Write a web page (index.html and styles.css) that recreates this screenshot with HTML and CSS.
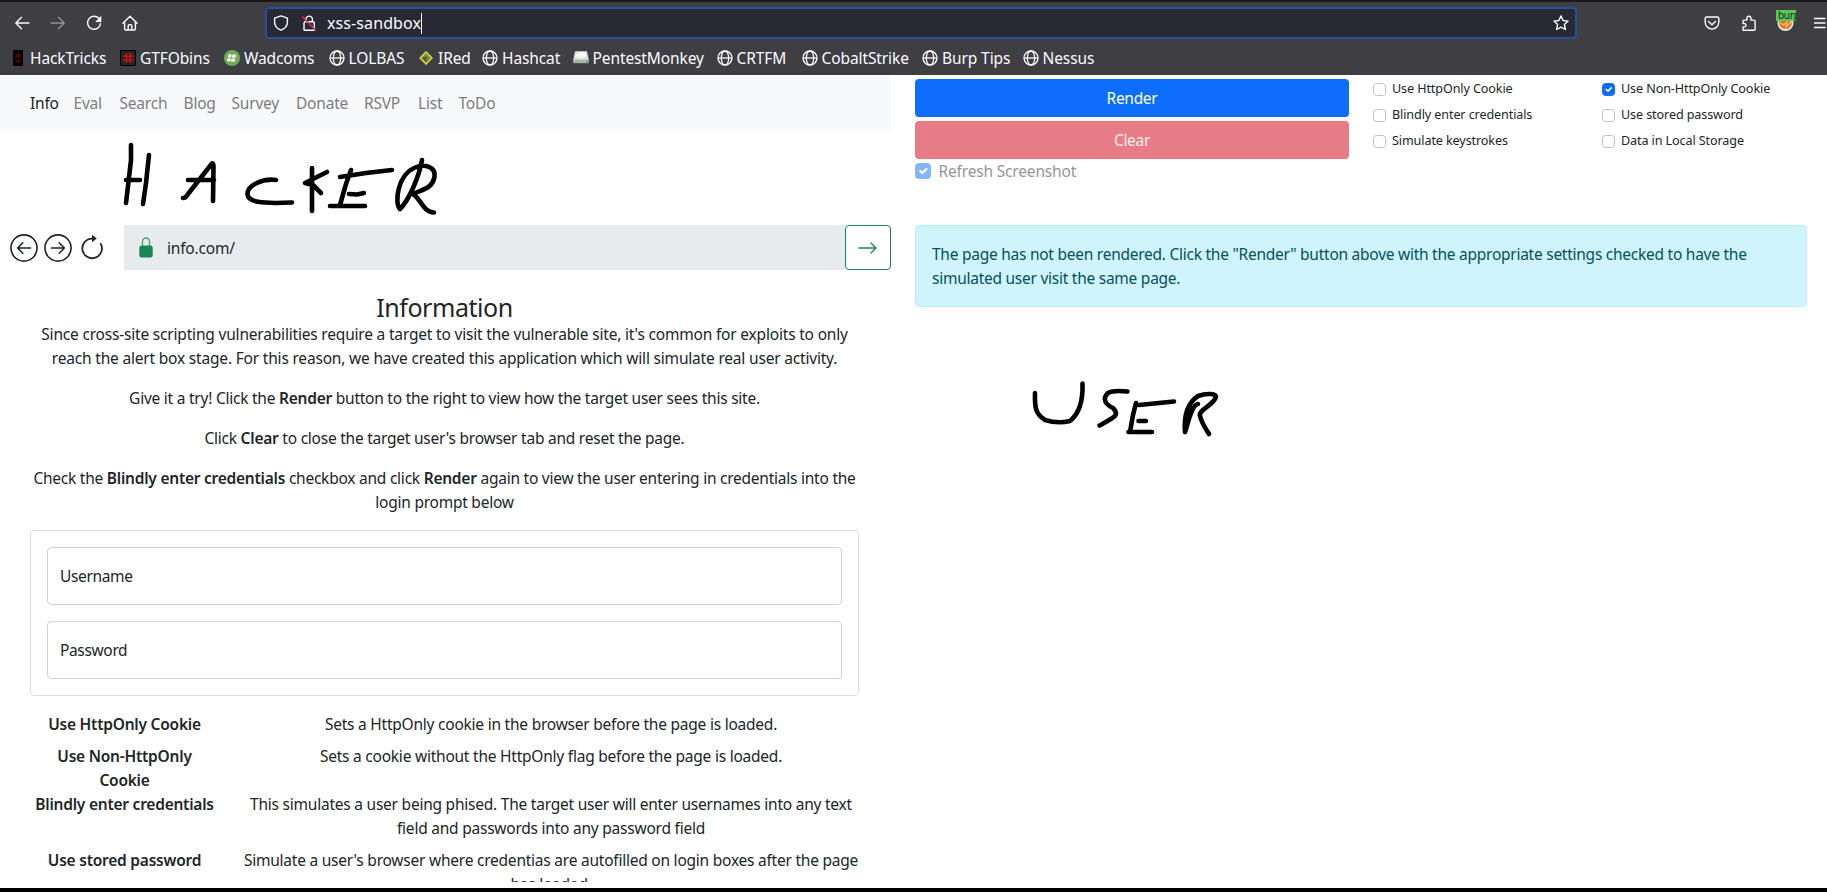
FILE: index.html
```html
<!DOCTYPE html>
<html lang="en">
<head>
<meta charset="utf-8">
<title>xss-sandbox</title>
<link rel="stylesheet" href="styles.css">
</head>
<body>
<svg width="0" height="0" class="defs">
  <symbol id="globe" viewBox="0 0 16 16"><g fill="none" stroke="#fbfbfe" stroke-width="1.3"><circle cx="8" cy="8" r="7"/><ellipse cx="8" cy="8" rx="3.7" ry="7"/><path d="M1 8h14"/></g></symbol>
</svg>
<header class="chrome">
  <div class="toolbar">
    <div class="nav-icons">
      <svg width="16" height="16" viewBox="0 0 16 16"><path d="M15 8H2M7.5 2.3 1.8 8l5.7 5.7" class="ln"/></svg>
      <svg width="16" height="16" viewBox="0 0 16 16" class="dim"><path d="M1 8h13M8.500 2.300 14.200 8l-5.700 5.700" class="ln"/></svg>
      <svg width="16" height="16" viewBox="0 0 16 16"><path d="M12.800 3.300A6.500 6.500 0 1 0 14.500 8.700" class="ln"/><path d="M15.300.8v6.100H9.200z" fill="#fbfbfe"/></svg>
      <svg width="16" height="16" viewBox="0 0 16 16"><path d="M.9 8.200 8 1.200l7.100 7M2.600 7v6.800q0 1.200 1.200 1.200h8.400q1.200 0 1.200-1.200V7M6.200 15v-4.200q0-1 1-1h1.600q1 0 1 1V15" class="ln"/></svg>
    </div>
    <div class="urlbar">
      <svg width="16" height="16" viewBox="0 0 16 16"><path d="M8 .9 14.400 3.100V7c0 4-2.800 6.800-6.400 8.200C4.400 13.800 1.600 11 1.600 7V3.100z" class="ln"/></svg>
      <svg width="16" height="16" viewBox="0 0 16 16" class="lock"><path d="M5 6.500V4.300a3.200 3.200 0 0 1 6.400 0v2.200M3 14.700V8.300q0-1.500 1.500-1.500h7.300q1.500 0 1.500 1.500v6.400q0 .5-.8.500H3.800q-.8 0-.8-.5z" class="ln"/><path d="m1.300 1.500 13.400 13.700" stroke="#e22850" stroke-width="1.500"/></svg>
      <span class="url">xss-sandbox</span><span class="caret"></span>
      <svg width="16" height="16" viewBox="0 0 16 16" class="star"><path d="m8 .9 2.100 4.600 5 .6-3.700 3.400 1 5L8 12.200l-4.400 2.300 1-5L.9 6.100l5-.6z" class="ln"/></svg>
    </div>
    <div class="tools">
      <svg width="16" height="16" viewBox="0 0 16 16"><path d="M2.500 2h11q1.300 0 1.300 1.300v4a6.800 6.800 0 0 1-13.600 0v-4Q1.200 2 2.500 2zM4.600 6.500 8 9.700l3.400-3.200" class="ln"/></svg>
      <svg width="16" height="16" viewBox="0 0 16 16"><path d="M2 15.200V11.900h1.300a1.700 1.700 0 0 0 0-3.400H2V5.900q0-.8.800-.8h3.100V3.200a2 2 0 0 1 4 0v1.900h3.200q1 0 1 1v8.100q0 1-1 1z" class="ln"/></svg>
      <span class="proxy"><svg width="20" height="20" viewBox="0 0 20 20"><circle cx="8.500" cy="12" r="8" fill="#e9e4df"/><path d="M2 11a6.500 6.500 0 0 0 13 1l-3-3H3z" fill="#d8791f"/><path d="m3 12 4 2 3-3-1 5 5-5" fill="none" stroke="#f6b469" stroke-width="1.400"/></svg><b>burp</b></span>
      <svg width="12" height="16" viewBox="0 0 12 16"><path d="M0 3.500h11M0 8h11M0 12.500h11" class="ln"/></svg>
    </div>
  </div>
  <nav class="bookmarks">
    <a><svg width="16" height="16" viewBox="0 0 16 16"><path d="M3 0h10v16H3z" fill="#0b0202"/><path d="M5.500 7.500 8 4l2 1.500-1.700 1 1.200 2M5.500 11h5" stroke="#8f0d0d" stroke-width="1" fill="none"/></svg>HackTricks</a>
    <a><svg width="16" height="16" viewBox="0 0 16 16"><path d="M.5.5h15v15H.5z" fill="#26262a" stroke="#000"/><path d="M6.500 3v10M10.300 3v10M3 6.200h10.500M3 10h10.500" stroke="#d40f0f" stroke-width="1.600"/></svg>GTFObins</a>
    <a><svg width="16" height="16" viewBox="0 0 16 16"><circle cx="8" cy="8" r="8" fill="#76a956"/><path d="m4.500 4.300 3.200.1-.7 3-3.200-.2zm4 .2 3.700.3-.7 3-3.700-.3zM3.600 8.200l3.200.2-.7 3-3.200-.4zm4 .3 3.700.3-.7 3-3.700-.4z" fill="#fff"/></svg>Wadcoms</a>
    <a><svg width="16" height="16"><use href="#globe"/></svg>LOLBAS</a>
    <a><svg width="16" height="16" viewBox="0 0 16 16"><path d="m8 .8 7 7.200-7 7.200L1 8z" fill="#c3d047"/><path d="M8 3.500 12.300 8 8 12.500 3.700 8z" fill="#58612c"/><path d="m5.500 7 2.500-2 2.500 3-2 2" stroke="#a9b45a" fill="none"/></svg>IRed</a>
    <a><svg width="16" height="16"><use href="#globe"/></svg>Hashcat</a>
    <a><svg width="16" height="16" viewBox="0 0 16 16"><path d="M2 1.200h12l1.800 9.300H.2z" fill="#e4e4e4"/><path d="M.2 9.500h15.600v3.700H.2z" fill="#adb0ab"/><ellipse cx="8" cy="5" rx="5" ry="3" fill="#f7f7f7"/><path d="M13 11h1.500v1.500H13z" fill="#4da020"/></svg>PentestMonkey</a>
    <a><svg width="16" height="16"><use href="#globe"/></svg>CRTFM</a>
    <a><svg width="16" height="16"><use href="#globe"/></svg>CobaltStrike</a>
    <a><svg width="16" height="16"><use href="#globe"/></svg>Burp Tips</a>
    <a><svg width="16" height="16"><use href="#globe"/></svg>Nessus</a>
  </nav>
</header>
<main class="page">
  <section class="left">
    <nav class="navbar"><a class="active">Info</a><a>Eval</a><a>Search</a><a>Blog</a><a>Survey</a><a>Donate</a><a>RSVP</a><a>List</a><a>ToDo</a></nav>
    <div class="address">
      <div class="controls">
        <svg width="28" height="28" viewBox="0 0 28 28"><circle cx="14" cy="14" r="13.100"/><path d="M20.500 14H8M12.800 8.800 7.600 14l5.200 5.200"/></svg>
        <svg width="28" height="28" viewBox="0 0 28 28"><circle cx="14" cy="14" r="13.100"/><path d="M7.500 14H20M15.200 8.800l5.200 5.200-5.200 5.200"/></svg>
        <svg width="28" height="28" viewBox="0 0 28 28"><path d="M14 4.600A9.800 9.800 0 1 0 22.800 9.800" stroke-width="1.800"/><path d="M14 .8v7.400L18.800 4.500z" fill="#212529" stroke="none"/></svg>
      </div>
      <div class="address-field"><svg width="14" height="21" viewBox="0 0 14 21"><path d="M3.500 9V4.500a3.500 3.500 0 0 1 7 0V9" fill="none" stroke="#4fa27a" stroke-width="1.400"/><rect x=".3" y="8.500" width="13.400" height="12" rx="2.500" fill="#198754"/></svg><span>info.com/</span></div>
      <button class="go"><svg width="20" height="14" viewBox="0 0 20 14"><path d="M1 7h17M13 2l5 5-5 5"/></svg></button>
    </div>
    <div class="content">
      <h1>Information</h1>
      <p class="intro">Since cross-site scripting vulnerabilities require a target to visit the vulnerable site, it's common for exploits to only<br>reach the alert box stage. For this reason, we have created this application which will simulate real user activity.</p>
      <p>Give it a try! Click the <b>Render</b> button to the right to view how the target user sees this site.</p>
      <p>Click <b>Clear</b> to close the target user's browser tab and reset the page.</p>
      <p>Check the <b>Blindly enter credentials</b> checkbox and click <b>Render</b> again to view the user entering in credentials into the<br>login prompt below</p>
      <form class="login"><div class="field">Username</div><div class="field">Password</div></form>
      <dl>
        <dt>Use HttpOnly Cookie</dt><dd>Sets a HttpOnly cookie in the browser before the page is loaded.</dd>
        <dt>Use Non-HttpOnly<br>Cookie</dt><dd>Sets a cookie without the HttpOnly flag before the page is loaded.</dd>
        <dt>Blindly enter credentials</dt><dd>This simulates a user being phised. The target user will enter usernames into any text<br>field and passwords into any password field</dd>
        <dt>Use stored password</dt><dd>Simulate a user's browser where credentias are autofilled on login boxes after the page<br>has loaded.</dd>
      </dl>
    </div>
  </section>
  <section class="right">
    <div class="panel">
      <div class="actions">
        <button class="btn render">Render</button>
        <button class="btn clear">Clear</button>
        <label class="refresh"><i class="box on"><svg viewBox="0 0 20 20"><path d="m6 10 3 3 6-6"/></svg></i>Refresh Screenshot</label>
      </div>
      <div class="options">
        <label><i class="box"></i>Use HttpOnly Cookie</label><label><i class="box on"><svg viewBox="0 0 20 20"><path d="m6 10 3 3 6-6"/></svg></i>Use Non-HttpOnly Cookie</label>
        <label><i class="box"></i>Blindly enter credentials</label><label><i class="box"></i>Use stored password</label>
        <label><i class="box"></i>Simulate keystrokes</label><label><i class="box"></i>Data in Local Storage</label>
      </div>
    </div>
    <div class="alert">The page has not been rendered. Click the "Render" button above with the appropriate settings checked to have the<br>simulated user visit the same page.</div>
  </section>
</main>
<div class="bottom"></div>
<!-- hand-drawn annotations -->
<svg class="ink" width="1827" height="892" viewBox="0 0 1827 892">
  <path d="M131 145V160L128 186 126 203M149 155 146 183 143 204M126 180H140"/>
  <path d="M183 198Q186 198 188 194L212 163.500Q213.500 163 213.500 167L213 201M188 180H214"/>
  <path d="M276 180C262 178 247 186 247.500 194C248 202 260 204 292 202.500"/>
  <path d="M312 168V211M327 172 305 183 313 185 321 193"/>
  <path d="M340 177 366 173 392 170M351 170 346 184 340 205M349 194 357 194.500 364 193M330 206H365"/>
  <path d="M422 160C419 177 409 200 400 209C394 203 398 175 414 168C425 163 436 167 434.500 177C432 189 423 189 413 194C421 199 423 212 434 212.500"/>
  <path d="M1035 393C1034.500 409 1036 414 1045 420Q1058 424 1070 421C1080 413 1083 398 1082.500 383.500"/>
  <path d="M1127.500 391.500Q1113 390 1108 393C1102 399 1105 404 1113 408C1120 415 1115 417 1099.500 425.500"/>
  <path d="M1139 405 1174 401.500M1136 403 1133 415 1130 432M1138.500 421H1146M1128.500 432H1152"/>
  <path d="M1198 404C1191 405 1188 425 1185 432C1184 419 1186 404 1198 396C1206 393 1218 393 1215.500 398C1212 406 1198 410 1200 416C1202 424 1206 429 1209 434"/>
</svg>
</body>
</html>
```
FILE: styles.css
```css
* { box-sizing: border-box; }
body { margin: 0; width: 1827px; height: 892px; overflow: hidden; position: relative; display: flex; flex-direction: column; background: #fff; color: #212529; font: 15.5px/24px "Noto Sans", sans-serif; letter-spacing: -0.18px; white-space: nowrap; }
.defs { position: absolute; }
svg { flex: none; }
b, dt { font-weight: 600; }
.chrome { height: 75px; background: #3e3e43; border-top: 2px solid #18181c; color: #fbfbfe; }
.ln { fill: none; stroke: #fbfbfe; stroke-width: 1.4; stroke-linecap: round; stroke-linejoin: round; }
.dim { opacity: .45; }
.toolbar { height: 41px; display: flex; align-items: center; padding: 0 0 0 14px; }
.nav-icons { width: 251px; display: flex; gap: 20px; }
.urlbar { width: 1312px; height: 32px; margin-top: 1px; border: 2px solid #27509b; border-radius: 4px; background: #282935; display: flex; align-items: center; padding: 0 6px; }
.lock { margin-left: 12px; }
.url { font-size: 16px; letter-spacing: .1px; margin-left: 10px; }
.caret { width: 1px; height: 21px; background: #fff; }
.star { margin-left: auto; }
.tools { flex: 1; display: flex; align-items: center; padding-left: 127px; }
.tools > svg:nth-child(2) { margin-left: 21px; }
.proxy { position: relative; width: 20px; height: 20px; margin: 0 17px 0 20px; }
.proxy svg { display: block; margin-top: -2px; }
.proxy b { position: absolute; left: -1px; top: -3px; width: 20px; height: 11px; overflow: hidden; background: #5ac65c; color: #10351a; font: 10px/11px "Noto Sans", sans-serif; letter-spacing: -.3px; padding-left: 2px; }
.bookmarks { height: 30px; padding-left: 10px; display: grid; align-items: center; grid-template-columns: 110px 104px 104.500px 89.500px 64px 90.500px 144px 85px 120.500px 100.500px 80px; letter-spacing: -.1px; }
.bookmarks a { display: flex; align-items: center; gap: 4px; }
.page { height: 807px; overflow: hidden; display: flex; }
.left { width: 891px; }
.navbar { height: 56px; background: #f8f9fb; display: grid; grid-template-columns: 43.500px 46px 64px 48px 64.500px 68px 54px 40.500px 40px; align-items: center; padding-left: 30px; color: #7c7d7e; letter-spacing: -.2px; }
.active { color: #1c1d1e; }
.address { margin-top: 94px; height: 45px; display: flex; }
.controls { width: 124px; display: flex; align-items: center; gap: 6px; padding-left: 9.500px; }
.controls svg { fill: none; stroke: #212529; stroke-width: 1.600; stroke-linecap: round; stroke-linejoin: round; }
.controls svg:nth-child(3) { margin-left: .5px; }
.address-field { flex: 1; background: #e8ebed; display: flex; align-items: center; gap: 14px; padding-left: 15px; }
.go { width: 46px; border: 1px solid #198754; border-radius: 4px; background: #fff; padding: 0; display: flex; align-items: center; justify-content: center; }
.go svg { fill: none; stroke: #198754; stroke-width: 1.300; stroke-linecap: round; stroke-linejoin: round; }
.content { padding: 22px 32px 0 30px; text-align: center; }
h1 { margin: 0; font-size: 25px; line-height: 30px; font-weight: 400; letter-spacing: -.43px; }
p { margin: 0 0 16px; letter-spacing: -.24px; }
.intro { letter-spacing: -.19px; }
.login { border: 1px solid #dadde0; border-radius: 4px; height: 166px; padding: 16px; display: flex; flex-direction: column; gap: 16px; }
.field { height: 58px; border: 1px solid #ced4da; border-radius: 4px; text-align: left; line-height: 57px; padding-left: 12px; letter-spacing: -.35px; }
dl { margin: 16px 0 0; display: grid; grid-template-columns: 189px 616px; column-gap: 24px; letter-spacing: -.23px; }
dt, dd { margin: 0; }
dt:nth-of-type(1), dd:nth-of-type(3) { padding-bottom: 8px; }
.right { flex: 1; padding: 4px 20px 0 24px; }
.panel { height: 146px; display: grid; grid-template-columns: 434px 1fr; column-gap: 24px; }
.actions { display: flex; flex-direction: column; gap: 4px; }
.btn { height: 38px; border: 0; border-radius: 4px; color: #fff; font: inherit; letter-spacing: -.3px; }
.render { background: #0d6efd; }
.clear { background: #e77c86; color: #fbeef0; }
.refresh { display: flex; gap: 7.500px; height: 17px; align-items: center; color: #949698; line-height: 17px; letter-spacing: -.17px; }
.refresh .box { width: 16px; height: 16px; opacity: .5; margin-top: -1px; }
.options { display: grid; grid-template-columns: 229px 1fr; grid-auto-rows: 26px; font-size: 12.600px; letter-spacing: -.11px; }
.options label { display: flex; align-items: center; gap: 6px; height: 20px; }
.box { width: 13px; height: 13px; border: 1px solid #bfbfbf; border-radius: 3.500px; flex: none; display: block; }
.on { background: #0d6efd; border-color: #0d6efd; }
.on svg { display: block; width: 100%; height: 100%; fill: none; stroke: #fff; stroke-width: 3; stroke-linecap: round; stroke-linejoin: round; }
.alert { height: 82px; border: 1px solid #b6effb; border-radius: 4px; background: #cff4fc; color: #055160; padding: 16px; letter-spacing: -.255px; }
.bottom { height: 4px; margin-top: auto; background: #000; }
.ink { position: absolute; left: 0; top: 0; pointer-events: none; fill: none; stroke: #000; stroke-width: 4.600; stroke-linecap: round; stroke-linejoin: round; }
```
